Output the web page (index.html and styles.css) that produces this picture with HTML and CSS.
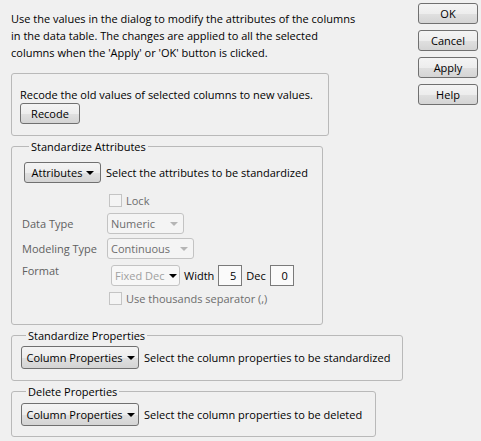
FILE: index.html
```
<!DOCTYPE html>
<html>
<head>
<meta charset="utf-8">
<link rel="stylesheet" href="styles.css">
</head>
<body>
<div class="dialog">
  <div class="main">
    <p class="intro">Use the values in the dialog to modify the attributes of the columns<br>in the data table. The changes are applied to all the selected<br>columns when the 'Apply' or 'OK' button is clicked.</p>

    <div class="box recode">
      <div class="line">Recode the old values of selected columns to new values.</div>
      <button class="btn recode-btn">Recode</button>
    </div>

    <fieldset class="group attrs">
      <legend>Standardize Attributes</legend>
      <div class="row top-row">
        <button class="btn menu-btn attr-btn">Attributes <span class="tri"></span></button>
        <span>Select the attributes to be standardized</span>
      </div>
      <div class="grid">
        <span></span>
        <label class="check dis"><span class="box13"></span>Lock</label>

        <span class="lbl">Data Type</span>
        <div class="combo dis w-num"><span>Numeric</span><span class="tri gray"></span></div>

        <span class="lbl">Modeling Type</span>
        <div class="combo dis w-cont"><span>Continuous</span><span class="tri gray"></span></div>

        <span class="lbl lbl-top">Format</span>
        <div class="fmt">
          <div class="combo fixed"><span>Fixed Dec</span><span class="tri"></span></div>
          <span>Width</span>
          <span class="num">5</span>
          <span>Dec</span>
          <span class="num">0</span>
        </div>

        <span></span>
        <label class="check dis"><span class="box13"></span>Use thousands separator (,)</label>
      </div>
    </fieldset>

    <fieldset class="group props">
      <legend>Standardize Properties</legend>
      <div class="row">
        <button class="btn menu-btn col-btn">Column Properties <span class="tri"></span></button>
        <span>Select the column properties to be standardized</span>
      </div>
    </fieldset>

    <fieldset class="group del">
      <legend>Delete Properties</legend>
      <div class="row">
        <button class="btn menu-btn col-btn">Column Properties <span class="tri"></span></button>
        <span>Select the column properties to be deleted</span>
      </div>
    </fieldset>
  </div>

  <div class="side">
    <button class="btn side-btn">OK</button>
    <button class="btn side-btn">Cancel</button>
    <button class="btn side-btn">Apply</button>
    <button class="btn side-btn">Help</button>
  </div>
</div>
</body>
</html>
```

FILE: styles.css
```
html, body {
  margin: 0;
  padding: 0;
  background: #f0f0f0;
}
body {
  font-family: "Open Sans", "Noto Sans", sans-serif;
  font-size: 11px;
  color: #000;
  width: 481px;
  height: 441px;
  overflow: hidden;
}
.dialog {
  display: flex;
  align-items: flex-start;
}
.main {
  width: 407px;
  padding-left: 11px;
  white-space: nowrap;
}
.intro {
  margin: 10px 0 0 0;
  line-height: 17px;
}
.box {
  box-sizing: border-box;
  border: 1px solid #b9b9b9;
  border-radius: 3px;
}
.recode {
  margin-top: 12px;
  width: 318px;
  height: 63px;
  padding: 12px 0 0 8px;
}
.line {
  line-height: 17px;
}
.btn {
  font-family: inherit;
  font-size: 11px;
  color: #000;
  box-sizing: border-box;
  height: 21px;
  border: 1px solid #707070;
  border-radius: 3px;
  background: linear-gradient(to bottom, #f4f4f4 0%, #ededed 50%, #e0e0e0 51%, #d4d4d4 100%);
  padding: 0;
  margin: 0;
  line-height: 18px;
  white-space: nowrap;
  display: inline-flex;
  align-items: center;
  justify-content: center;
}
.recode-btn {
  width: 60px;
  margin-top: 0;
}
.group {
  box-sizing: border-box;
  margin: 0;
  border: 1px solid #b9b9b9;
  border-radius: 3px;
  padding: 0;
  min-width: 0;
}
.group legend {
  padding: 0 2px;
  margin-left: 5px;
  line-height: 17px;
}
.attrs {
  margin-top: 2px;
  width: 312px;
  height: 187px;
  padding: 7px 0 0 12px;
}
.props {
  margin-top: 2px;
  width: 392px;
  height: 54px;
  padding: 2px 0 0 9px;
}
.del {
  margin-top: 2px;
  width: 365px;
  height: 54px;
  padding: 3px 0 0 9px;
}
.row {
  display: flex;
  align-items: center;
  gap: 5px;
}
.menu-btn {
  padding: 0 4px 0 5px;
  gap: 4px;
}
.attr-btn {
  width: 77px;
}
.col-btn {
  width: 118px;
  height: 23px;
}
.tri {
  display: inline-block;
  flex: none;
  width: 0;
  height: 0;
  border-left: 4px solid transparent;
  border-right: 4px solid transparent;
  border-top: 4px solid #000;
}
.tri.gray {
  border-top-color: #b5b5b5;
}
.grid {
  display: grid;
  grid-template-columns: 85px auto;
  row-gap: 4px;
  margin-top: 9px;
  margin-left: -2px;
  align-items: center;
}
.lbl {
  color: #5f5f5f;
}
.lbl-top {
  align-self: start;
  padding-top: 0;
}
.check {
  display: flex;
  align-items: center;
  gap: 4px;
  margin-left: 2px;
  height: 17px;
}
.check.dis {
  color: #6d6d6d;
}
.box13 {
  box-sizing: border-box;
  width: 13px;
  height: 13px;
  border: 1px solid #c4c4c4;
  background: #f4f4f4;
  display: inline-block;
}
.combo {
  box-sizing: border-box;
  height: 21px;
  border: 1px solid #c3c3c3;
  border-radius: 3px;
  background: #f4f4f4;
  display: flex;
  align-items: center;
  justify-content: space-between;
  padding: 0 5px 0 3px;
}
.combo.dis {
  color: #6d6d6d;
}
.w-num { width: 77px; }
.w-cont { width: 87px; }
.fmt {
  display: flex;
  align-items: center;
  gap: 4px;
  margin-left: 4px;
  margin-top: 2px;
}
.fixed {
  width: 69px;
  color: #a0a0a0;
  padding: 0 2px 0 3px;
  background: #f7f7f7;
}
.num {
  box-sizing: border-box;
  width: 24px;
  height: 21px;
  border: 1px solid #7a7a7a;
  background: #fafafa;
  text-align: right;
  padding-right: 5px;
  line-height: 19px;
}
.side {
  display: flex;
  flex-direction: column;
  gap: 6px;
  margin-left: 0;
  padding-top: 3px;
}
.side-btn {
  width: 60px;
}
```
